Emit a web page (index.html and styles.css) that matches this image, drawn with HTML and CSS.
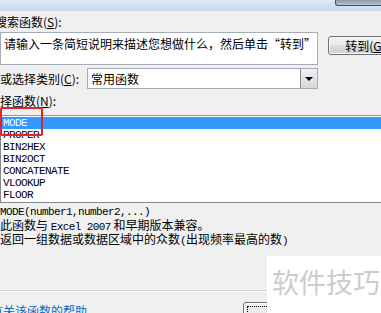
FILE: index.html
```html
<!DOCTYPE html>
<html lang="zh-CN">
<head>
  <meta charset="UTF-8" />
  <title>插入函数</title>
  <link rel="stylesheet" href="styles.css">
</head>
<body>
  <div class="titlebar">
    <div class="frame-btn"></div>
  </div>

  <div class="dialog">
    <div class="label label-search">搜索函数(<u>S</u>):</div>
    <div class="search-row">
      <div class="search-box">请输入一条简短说明来描述您想做什么，然后单击“转到”</div>
      <div class="btn btn-go">转到(<u>G</u>)</div>
    </div>

    <div class="cat-row">
      <span class="label">或选择类别(<u>C</u>):</span>
      <div class="combo">
        <span class="combo-text">常用函数</span>
        <span class="combo-arrow"></span>
      </div>
    </div>

    <div class="label label-list">选择函数(<u>N</u>):</div>
    <div class="listbox">
      <div class="item selected">MODE</div>
      <div class="item">PROPER</div>
      <div class="item">BIN2HEX</div>
      <div class="item">BIN2OCT</div>
      <div class="item">CONCATENATE</div>
      <div class="item">VLOOKUP</div>
      <div class="item">FLOOR</div>
    </div>

    <div class="desc">
      <div class="mono">MODE(number1,number2,...)</div>
      <div>此函数与 <span class="mono">Excel 2007</span> 和早期版本兼容。</div>
      <div>返回一组数据或数据区域中的众数<span class="mono">(</span>出现频率最高的数<span class="mono">)</span></div>
    </div>

    <div class="separator"></div>
    <div class="footer">
      <a class="help-link" href="#">有关该函数的帮助</a>
      <div class="btn btn-ok"><span class="focus"></span></div>
    </div>
  </div>

  <!-- red highlight over the selected item -->
  <div class="highlight"></div>
  <div class="watermark">软件技巧</div>
</body>
</html>
```

FILE: styles.css
```css
* {
  margin: 0;
  padding: 0;
  box-sizing: border-box;
}

body {
  width: 381px;
  height: 313px;
  overflow: hidden;
  position: relative;
  background: #f0f0f0;
  font-family: "Noto Sans CJK SC", sans-serif;
  font-size: 12px;
  line-height: 12px;
  color: #000;
}

u {
  text-decoration: underline;
}

.titlebar {
  height: 11px;
  background: linear-gradient(to bottom, #dde8f5, #c8d9ee);
  display: flex;
  justify-content: flex-end;
}

.frame-btn {
  width: 46px;
  height: 6px;
  background: linear-gradient(to bottom, #8e99a6, #b9c3cf);
  border: 1px solid #46505c;
  border-top: none;
  border-right: none;
  border-bottom-left-radius: 3px;
}

.dialog {
  overflow: hidden;
  height: 302px;
}

.label {
  white-space: nowrap;
}

.label-search {
  margin: 5px 0 0 -5px;
}

.search-row {
  display: flex;
  align-items: flex-start;
  margin-top: 4px;
}

.search-box {
  flex-shrink: 0;
  width: 318px;
  height: 33px;
  background: #fff;
  border: 1px solid #a5acb5;
  padding: 5px 0 0 3px;
  white-space: nowrap;
  overflow: hidden;
}

.btn {
  border: 1px solid #707070;
  border-radius: 3px;
  background: linear-gradient(to bottom, #f2f2f2 0%, #ebebeb 45%, #dddddd 50%, #cfcfcf 100%);
  box-shadow: inset 0 0 0 1px #fcfcfc;
}

.btn-go {
  width: 75px;
  height: 19px;
  margin: 4px 0 0 10px;
  padding-top: 3px;
  text-align: center;
  white-space: nowrap;
  flex-shrink: 0;
}

.cat-row {
  display: flex;
  align-items: center;
  margin-top: 3px;
}

.cat-row .label {
  width: 87px;
}

.combo {
  width: 231px;
  height: 21px;
  background: #fff;
  border: 1px solid #a5acb5;
  display: flex;
  align-items: center;
  justify-content: space-between;
}

.combo-text {
  padding-left: 3px;
}

.combo-arrow {
  width: 17px;
  height: 19px;
  border-left: 1px solid #8a8a8a;
  background: linear-gradient(to bottom, #f0f0f0, #d8d8d8);
  display: flex;
  align-items: center;
  justify-content: center;
}

.combo-arrow::after {
  content: "";
  border-left: 4px solid transparent;
  border-right: 4px solid transparent;
  border-top: 4px solid #000;
}

.label-list {
  margin: 6px 0 0 -12px;
}

.listbox {
  margin-top: 8px;
  height: 88px;
  background: #fff;
  border: 1px solid #828790;
  border-top-color: #7f9db9;
  border-right: none;
  padding-top: 1px;
}

.item {
  height: 12px;
  line-height: 12px;
  padding-left: 2px;
  font-family: "Liberation Mono", monospace;
  font-size: 11px;
  letter-spacing: -0.6px;
  color: #000;
}

.item.selected {
  background: #3399ff;
  color: #fff;
}

.desc {
  margin-top: 3px;
  line-height: 12.5px;
  white-space: nowrap;
}

.mono {
  font-family: "Liberation Mono", monospace;
  font-size: 11px;
  letter-spacing: -0.6px;
}

.separator {
  margin-top: 42px;
  height: 2px;
  border-top: 1px solid #d5d5d5;
  border-bottom: 1px solid #fff;
}

.footer {
  display: grid;
  grid-template-columns: 243px 100px;
  align-items: start;
}

.help-link {
  margin: 13px 0 0 -9px;
  color: #0066cc;
  text-decoration: underline;
  white-space: nowrap;
}

.btn-ok {
  margin-top: 10px;
  height: 24px;
  padding: 3px;
}

.focus {
  display: block;
  height: 100%;
  border: 1px dotted #000;
}

.highlight {
  position: absolute;
  left: 0;
  top: 107px;
  width: 43px;
  height: 29px;
  border: 2px solid #e0252a;
  border-radius: 2px;
}

.watermark {
  position: absolute;
  left: 267px;
  top: 256px;
  width: 114px;
  height: 57px;
  background: #fff;
  color: #cccccc;
  font-size: 27px;
  line-height: 27px;
  padding: 12px 0 0 5px;
  white-space: nowrap;
}
```
